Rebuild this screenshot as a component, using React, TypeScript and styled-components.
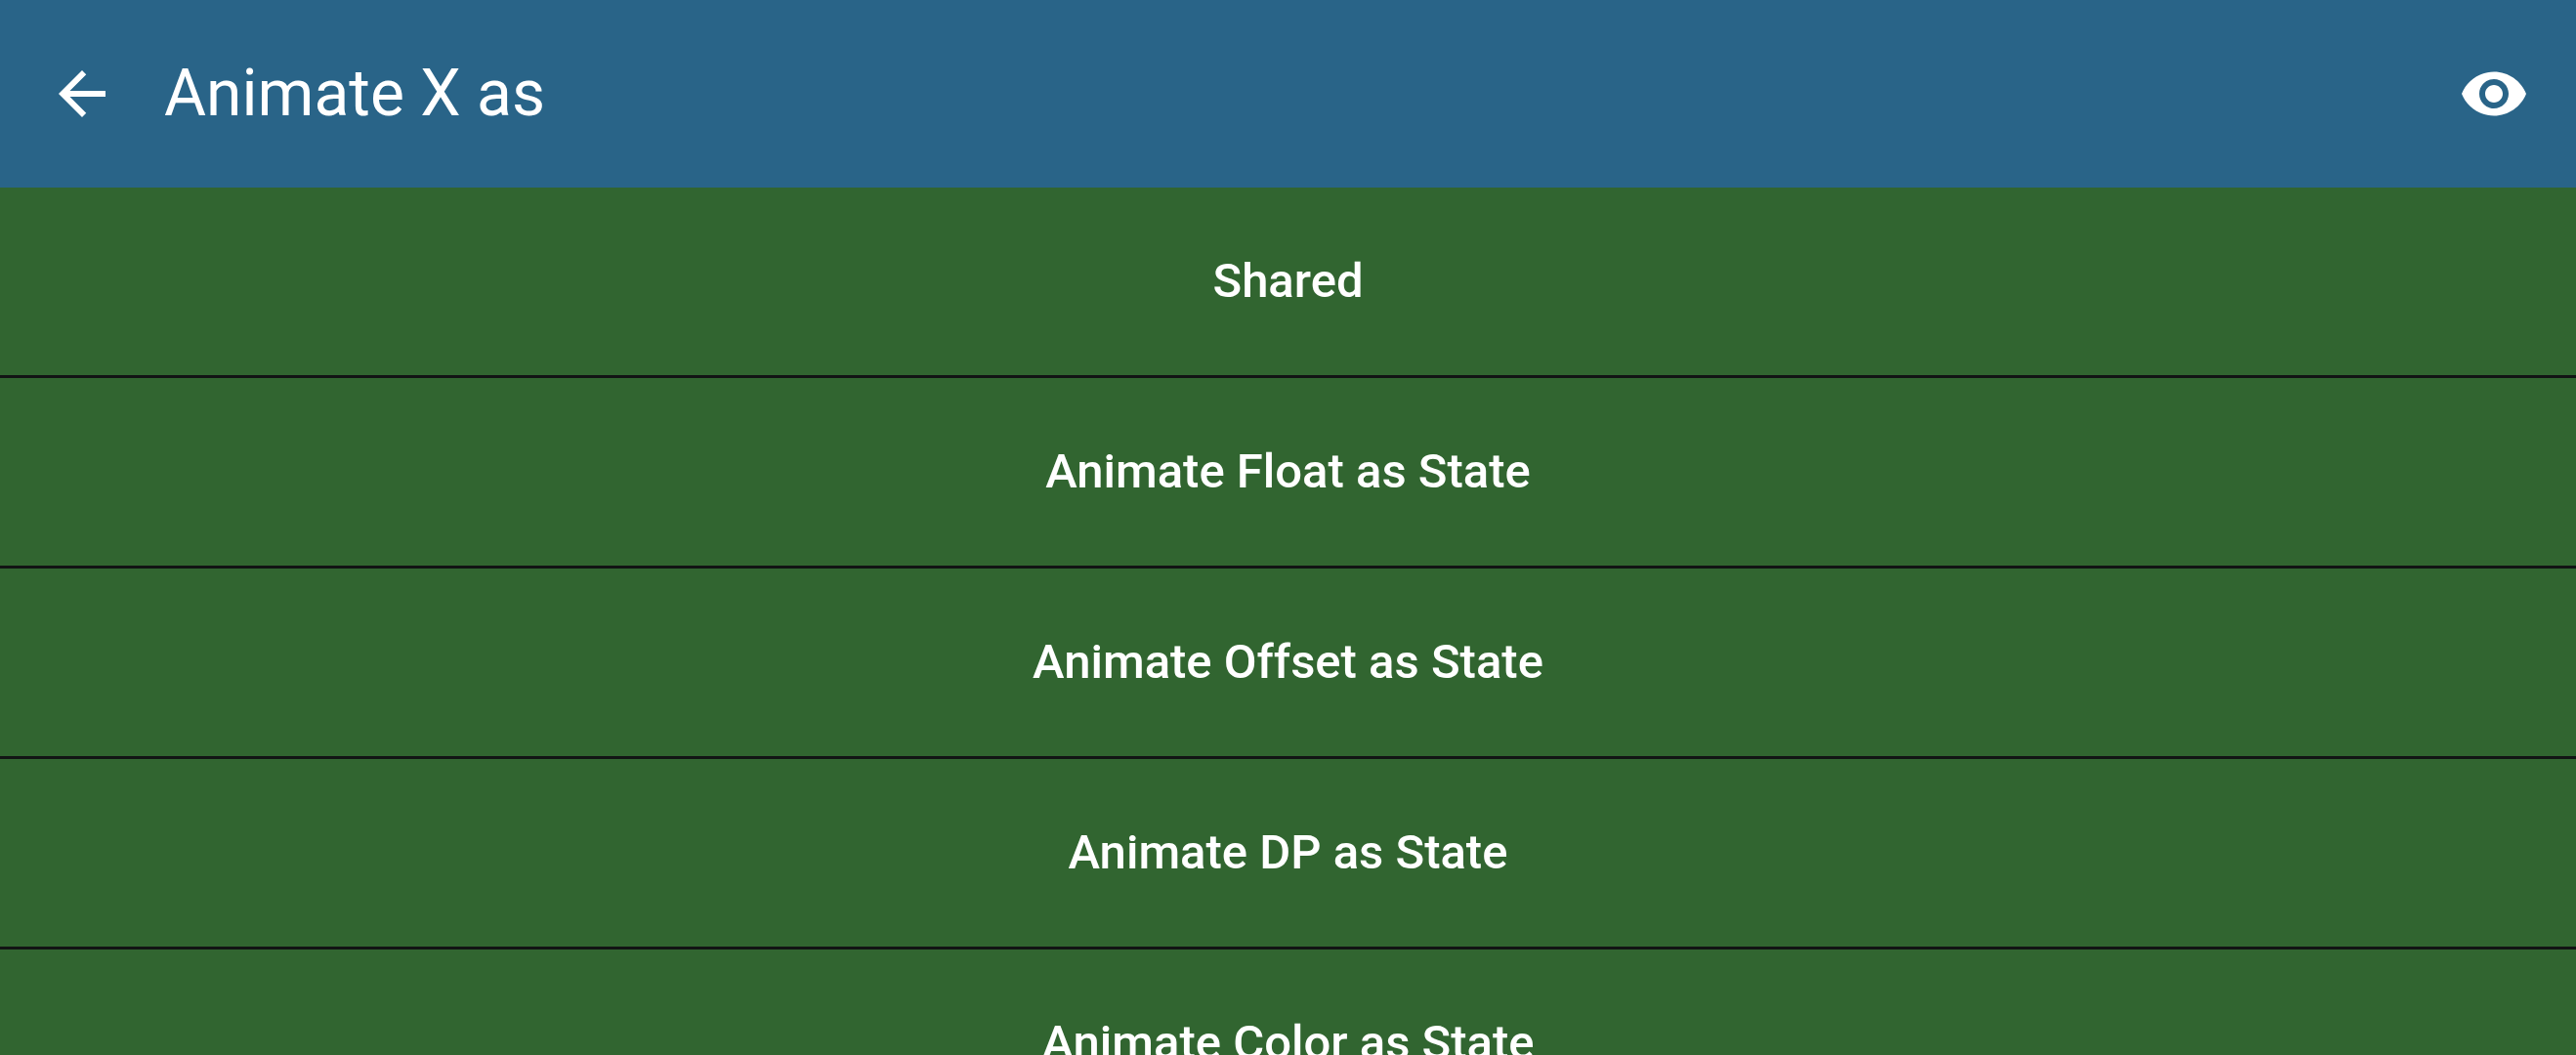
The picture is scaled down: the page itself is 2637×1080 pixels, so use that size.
import React from "react";
import styled, { createGlobalStyle } from "styled-components";

const GlobalStyle = createGlobalStyle`
  *, *::before, *::after { box-sizing: border-box; }
  body {
    margin: 0;
    background: #121414;
    color: #ffffff;
    font-family: Roboto, "Liberation Sans", sans-serif;
  }
`;

const Screen = styled.div`
  display: flex;
  flex-direction: column;
  height: 100vh;
`;

const TopBar = styled.header`
  display: flex;
  flex: none;
  align-items: center;
  gap: 12px;
  padding: 24px 12px;
  background: #296488;
`;

const IconButton = styled.button`
  display: flex;
  flex: none;
  align-items: center;
  justify-content: center;
  width: 144px;
  height: 144px;
  padding: 0;
  border: 0;
  border-radius: 50%;
  background: transparent;
  color: inherit;
  cursor: pointer;
`;

const Icon = styled.svg`
  width: 72px;
  height: 72px;
  fill: currentColor;
`;

const Title = styled.h1`
  flex: 1;
  margin: 0;
  font-size: 66px;
  font-weight: 400;
  line-height: 84px;
`;

const List = styled.ul`
  display: flex;
  flex: 1;
  flex-direction: column;
  gap: 3px;
  min-height: 0;
  margin: 0;
  padding: 0;
  overflow-y: auto;
  scrollbar-width: none;
  list-style: none;
`;

const Item = styled.li`
  flex: none;
`;

const ItemButton = styled.button`
  display: block;
  width: 100%;
  padding: 60px 48px;
  border: 0;
  background: #316530;
  color: inherit;
  font-family: inherit;
  font-size: 49px;
  font-weight: 500;
  line-height: 72px;
  text-align: center;
  cursor: pointer;
`;

const entries = [
  "Shared",
  "Animate Float as State",
  "Animate Offset as State",
  "Animate DP as State",
  "Animate Color as State",
];

export default function App() {
  return (
    <>
      <GlobalStyle />
      <Screen>
        <TopBar>
          <IconButton type="button" aria-label="Back">
            <Icon viewBox="0 0 24 24" aria-hidden="true">
              <path d="M20 11H7.83l5.59-5.59L12 4l-8 8 8 8 1.41-1.41L7.83 13H20v-2z" />
            </Icon>
          </IconButton>
          <Title>Animate X as</Title>
          <IconButton type="button" aria-label="Preview">
            <Icon viewBox="0 0 24 24" aria-hidden="true">
              <path d="M12 4.5C7 4.5 2.73 7.61 1 12c1.73 4.39 6 7.5 11 7.5s9.27-3.11 11-7.5c-1.73-4.39-6-7.5-11-7.5zM12 17c-2.76 0-5-2.24-5-5s2.24-5 5-5 5 2.24 5 5-2.24 5-5 5zm0-8c-1.66 0-3 1.34-3 3s1.34 3 3 3 3-1.34 3-3-1.34-3-3-3z" />
            </Icon>
          </IconButton>
        </TopBar>
        <List>
          {entries.map((entry) => (
            <Item key={entry}>
              <ItemButton type="button">{entry}</ItemButton>
            </Item>
          ))}
        </List>
      </Screen>
    </>
  );
}
